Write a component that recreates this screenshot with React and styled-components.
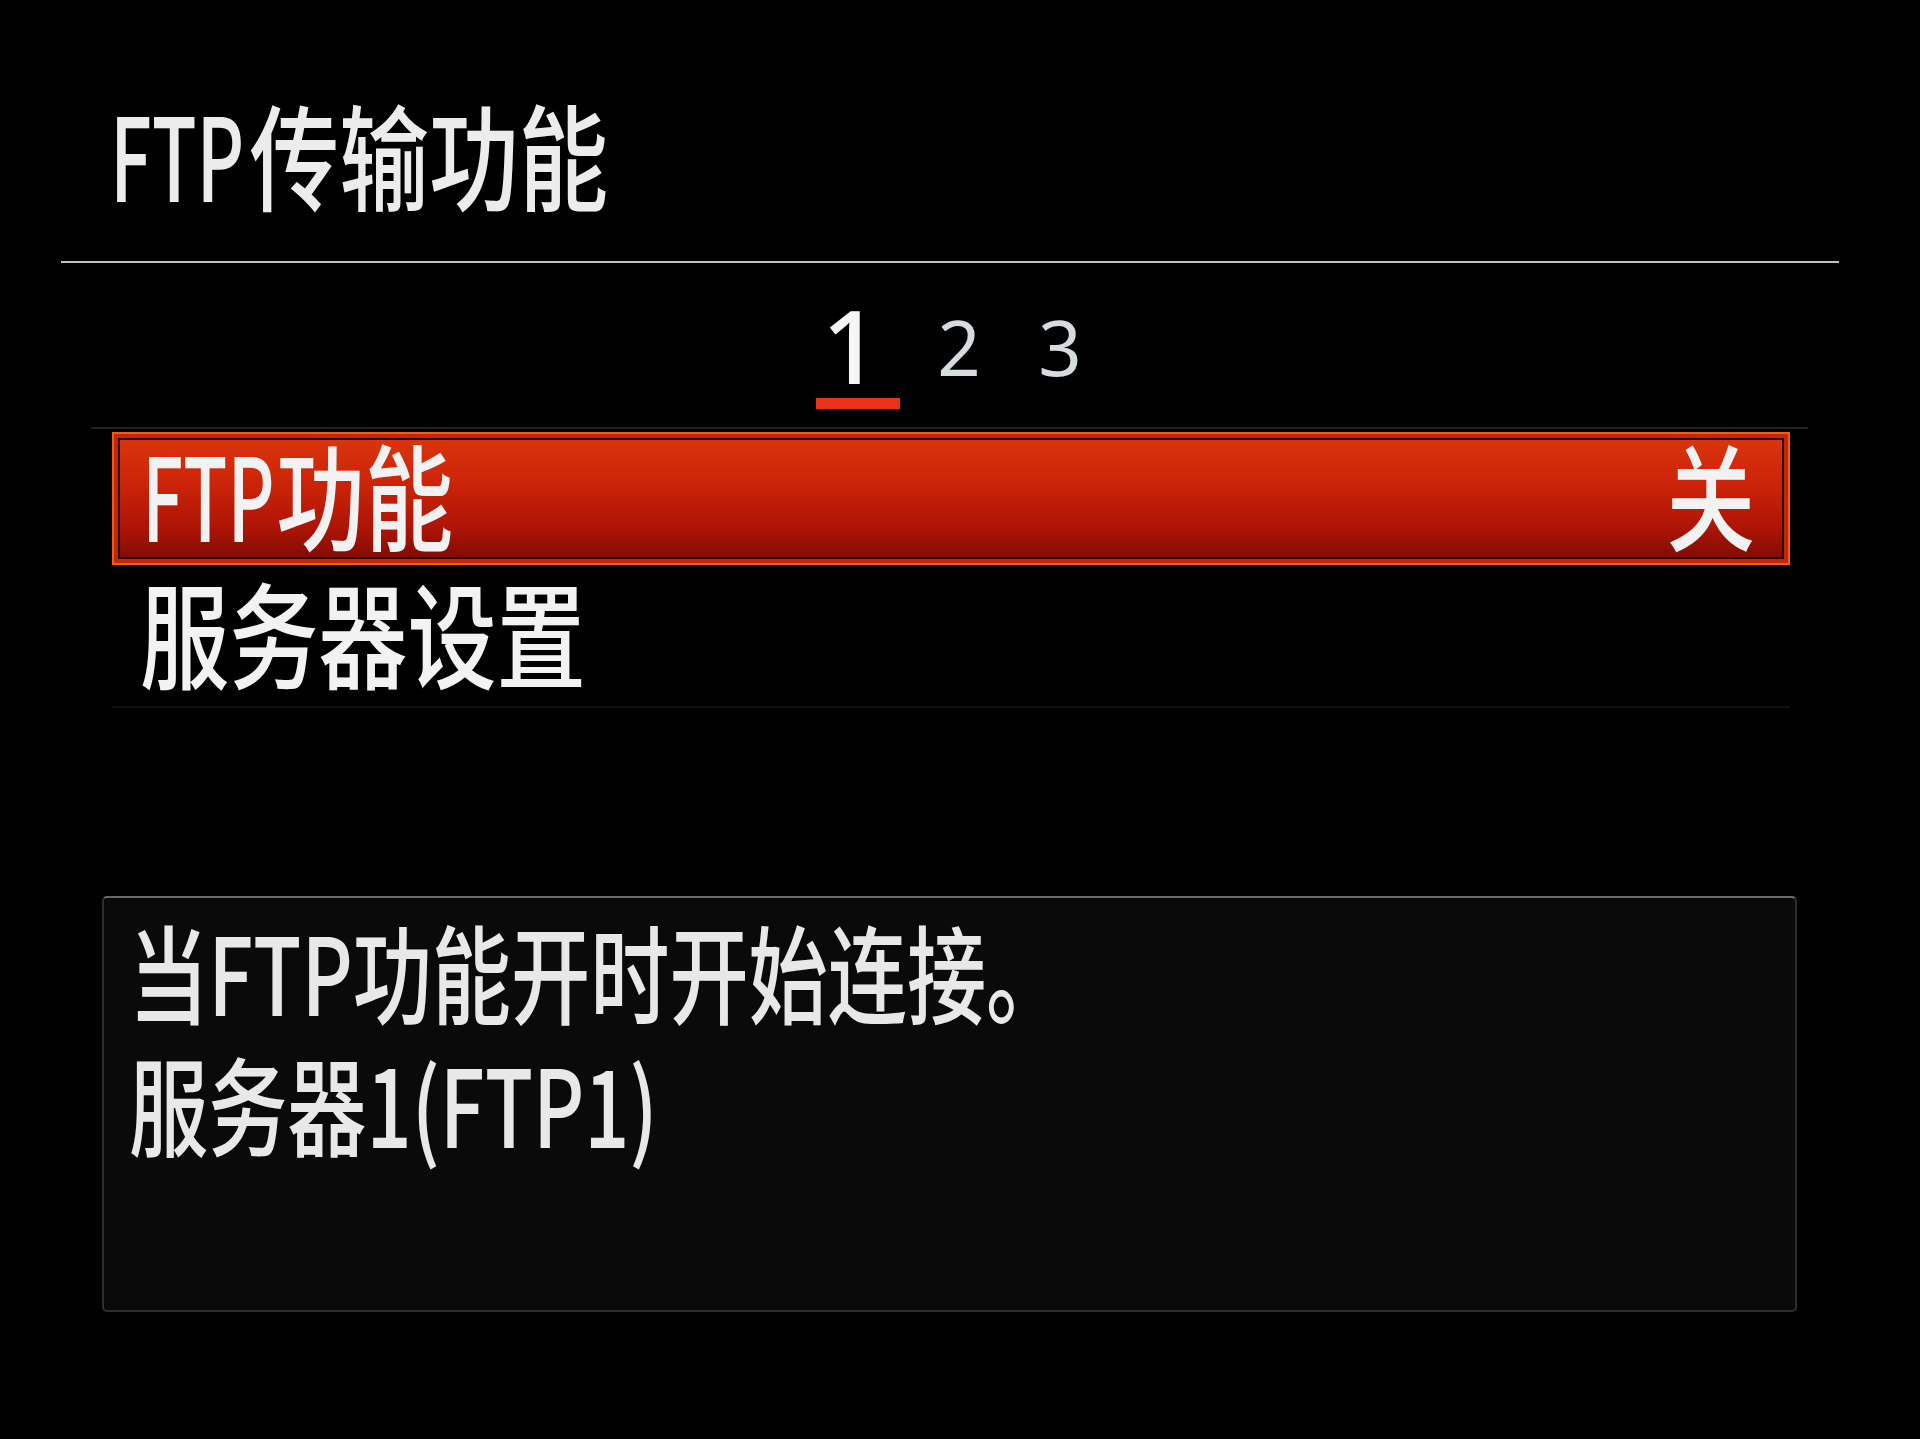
import React from "react";
import styled, { createGlobalStyle } from "styled-components";

const GlobalStyle = createGlobalStyle`
  html, body {
    margin: 0;
    padding: 0;
    background: #000;
  }
  body {
    font-family: "Noto Sans CJK SC", "Noto Sans", sans-serif;
    color: #f0f0f0;
  }
`;

const Screen = styled.div`
  width: 1920px;
  height: 1439px;
  background: #000;
  overflow: hidden;
`;

// camera menu glyphs are tall and narrow, so text is squeezed horizontally
const Narrow = styled.span`
  display: inline-block;
  white-space: nowrap;
  transform: scaleX(${(p) => p.$sx || 0.77});
  transform-origin: ${(p) => p.$origin || "left center"};
`;

// latin letters in the menu font are narrower still than the ideographs
const Latin = styled.span`
  display: inline-block;
  transform: scaleX(0.82);
  transform-origin: left center;
  margin-right: ${(p) => p.$pull || -0.31}em;
`;

const Header = styled.header`
  padding: 95px 0 0 110px;
`;

const Title = styled.h1`
  margin: 0;
  font-size: 115px;
  line-height: 115px;
  font-weight: 500;
  color: #ececec;
`;

const Divider = styled.div`
  margin: 51px 0 0 61px;
  width: 1778px;
  height: 2px;
  background: #c4c4c4;
`;

const TabRow = styled.div`
  display: flex;
  align-items: flex-start;
  gap: 17px;
  margin: 0 0 0 816px;
  height: 164px;
`;

const Tab = styled.div`
  width: 84px;
  display: flex;
  flex-direction: column;
  align-items: center;
  padding-top: ${(p) => (p.$active ? 31 : 46)}px;
`;

const TabNum = styled.span`
  font-family: "Noto Sans", "Open Sans", sans-serif;
  font-size: ${(p) => (p.$active ? 102 : 76)}px;
  line-height: 1;
  font-weight: ${(p) => (p.$active ? 500 : 400)};
  color: ${(p) => (p.$active ? "#f6f6f6" : "#d6dcdc")};
  margin-left: ${(p) => (p.$active ? -14 : 0)}px;
`;

const TabMark = styled.div`
  margin-top: 2px;
  width: 84px;
  height: 11px;
  background: #e8321a;
`;

const ThinRule = styled.div`
  margin-left: 91px;
  width: 1717px;
  height: 2px;
  background: #232323;
`;

const MenuList = styled.ul`
  list-style: none;
  margin: 3px 0 0 112px;
  padding: 0;
  width: 1678px;
`;

const MenuItem = styled.li`
  box-sizing: border-box;
  display: flex;
  align-items: center;
  justify-content: space-between;
  height: ${(p) => (p.$selected ? 133 : 143)}px;
  padding: 0 33px ${(p) => (p.$selected ? 12 : 10)}px 28px;
  font-size: 115px;
  line-height: 1;
  font-weight: 500;
  color: #f2f2f2;
  border: ${(p) => (p.$selected ? "2px solid #f45c16" : "none")};
  border-bottom: ${(p) => (p.$selected ? "2px solid #f45c16" : "2px solid #121212")};
  background: ${(p) =>
    p.$selected
      ? "linear-gradient(180deg, #dc360e 0%, #cc2409 38%, #ae1506 72%, #7c0a02 100%)"
      : "transparent"};
  box-shadow: ${(p) =>
    p.$selected ? "inset 0 0 0 4px #c4260a, inset 0 0 0 6px #230400" : "none"};
`;

const HelpBox = styled.section`
  box-sizing: border-box;
  margin: 188px 0 0 102px;
  width: 1695px;
  height: 416px;
  padding: 6px 0 0 25px;
  background: #0a0a0b;
  border: 2px solid #2e2e30;
  border-top-color: #6a6a6c;
  border-radius: 5px;
`;

const HelpLine = styled.div`
  font-size: 107px;
  line-height: 132px;
  font-weight: 500;
  color: #e8e8e8;
`;

export default function App() {
  return (
    <Screen>
      <GlobalStyle />
      <Header>
        <Title>
          <Narrow $sx={0.78}>
            <Latin $pull={-0.27}>FTP</Latin>传输功能
          </Narrow>
        </Title>
      </Header>
      <Divider />

      <TabRow>
        <Tab $active>
          <TabNum $active>1</TabNum>
          <TabMark />
        </Tab>
        <Tab>
          <TabNum>2</TabNum>
        </Tab>
        <Tab>
          <TabNum>3</TabNum>
        </Tab>
      </TabRow>
      <ThinRule />

      <MenuList>
        <MenuItem $selected>
          <Narrow>
            <Latin>FTP</Latin>功能
          </Narrow>
          <Narrow $origin="right center">关</Narrow>
        </MenuItem>
        <MenuItem>
          <Narrow $sx={0.775}>服务器设置</Narrow>
        </MenuItem>
      </MenuList>

      <HelpBox>
        <HelpLine>
          <Narrow $sx={0.74}>当FTP功能开时开始连接。</Narrow>
        </HelpLine>
        <HelpLine>
          <Narrow $sx={0.74}>服务器1(FTP1)</Narrow>
        </HelpLine>
      </HelpBox>
    </Screen>
  );
}
